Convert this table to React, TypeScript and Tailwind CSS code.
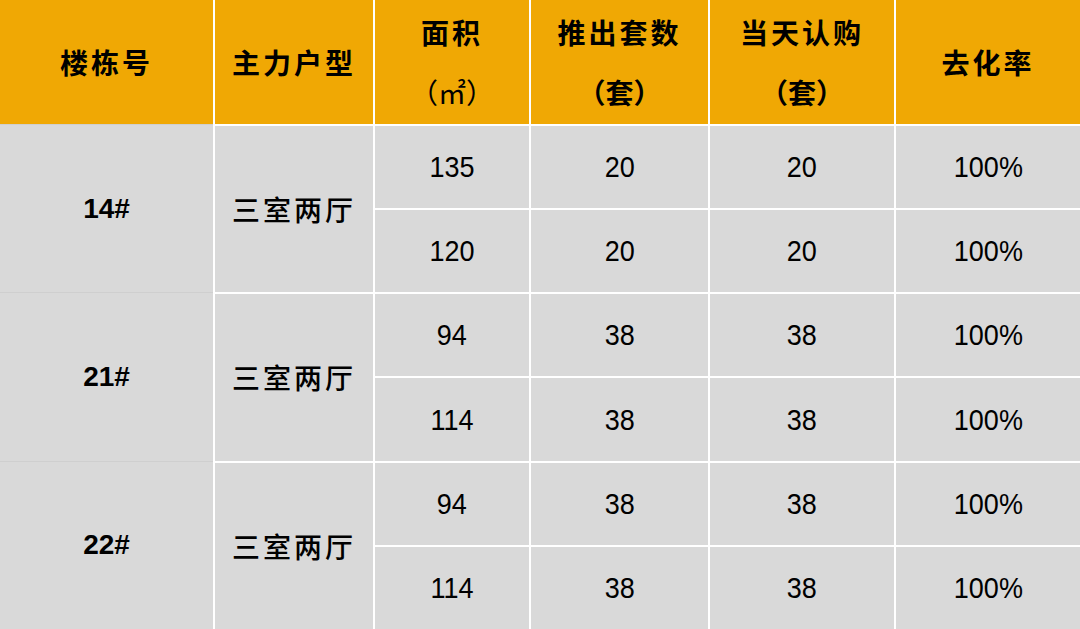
import React from "react";

const font = { fontFamily: '"Noto Sans CJK SC", sans-serif' };

interface Row {
  area: string;
  launched: string;
  sold: string;
  rate: string;
}

interface Group {
  building: string;
  type: string;
  rows: Row[];
}

const groups: Group[] = [
  {
    building: "14#",
    type: "三室两厅",
    rows: [
      { area: "135", launched: "20", sold: "20", rate: "100%" },
      { area: "120", launched: "20", sold: "20", rate: "100%" },
    ],
  },
  {
    building: "21#",
    type: "三室两厅",
    rows: [
      { area: "94", launched: "38", sold: "38", rate: "100%" },
      { area: "114", launched: "38", sold: "38", rate: "100%" },
    ],
  },
  {
    building: "22#",
    type: "三室两厅",
    rows: [
      { area: "94", launched: "38", sold: "38", rate: "100%" },
      { area: "114", launched: "38", sold: "38", rate: "100%" },
    ],
  },
];

const headCell =
  "bg-[#f0a804] flex flex-col items-center justify-center text-[28px] font-bold tracking-[3px] leading-[60px] text-black";
const bodyCell = "bg-[#d9d9d9] flex items-center justify-center text-black";

// condensed-looking numbers
const Num = ({ children }: { children: React.ReactNode }) => (
  <span className="inline-block scale-x-[0.9] font-['Liberation_Sans',sans-serif] text-[30px] leading-none">
    {children}
  </span>
);

export default function App() {
  return (
    <div className="w-[1080px] h-[629px] flex bg-white overflow-hidden" style={font}>
      {/* first column: merged, no white row lines */}
      <div className="w-[215px] shrink-0 flex flex-col border-r-2 border-white">
        <div className={`${headCell} h-[124px] shrink-0`}>楼栋号</div>
        {groups.map((g) => (
          <div
            key={g.building}
            className="flex-1 bg-[#d9d9d9] border-t border-[#cfcfcf] flex items-center justify-center text-[28px] font-bold text-black font-['Liberation_Sans',sans-serif]"
          >
            {g.building}
          </div>
        ))}
      </div>

      {/* rest of the table */}
      <div className="flex-1 grid grid-cols-[158px_154px_177px_184px_1fr] grid-rows-[124px_repeat(6,1fr)] gap-[2px]">
        <div className={headCell}>主力户型</div>
        <div className={headCell}>
          <span>面积</span>
          <span className="tracking-normal font-normal">（㎡）</span>
        </div>
        <div className={headCell}>
          <span>推出套数</span>
          <span className="tracking-normal">（套）</span>
        </div>
        <div className={headCell}>
          <span>当天认购</span>
          <span className="tracking-normal">（套）</span>
        </div>
        <div className={headCell}>去化率</div>

        {groups.map((g) => (
          <React.Fragment key={g.building}>
            <div className={`${bodyCell} row-span-2 text-[28px] font-medium tracking-[3px]`}>
              {g.type}
            </div>
            {g.rows.map((r, i) => (
              <React.Fragment key={i}>
                <div className={`${bodyCell} col-start-2`}>
                  <Num>{r.area}</Num>
                </div>
                <div className={bodyCell}>
                  <Num>{r.launched}</Num>
                </div>
                <div className={bodyCell}>
                  <Num>{r.sold}</Num>
                </div>
                <div className={bodyCell}>
                  <Num>{r.rate}</Num>
                </div>
              </React.Fragment>
            ))}
          </React.Fragment>
        ))}
      </div>
    </div>
  );
}
